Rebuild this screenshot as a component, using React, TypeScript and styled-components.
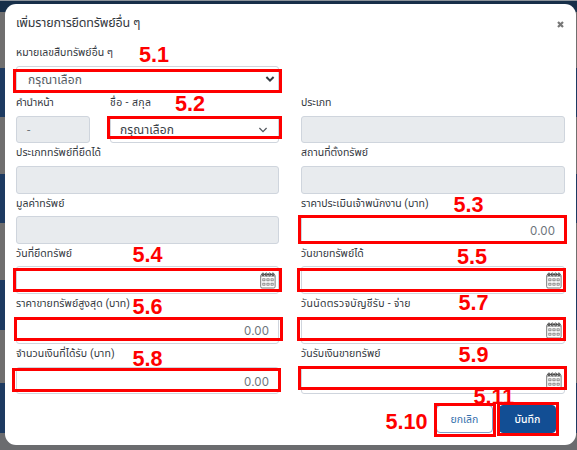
import React from 'react';
import styled, { createGlobalStyle } from 'styled-components';

const GlobalStyle = createGlobalStyle`
  * { box-sizing: border-box; }
  body {
    margin: 0;
    overflow: hidden;
    font-family: Roboto, "Noto Sans Thai", "Noto Sans", sans-serif;
    color: #33383e;
  }
`;

const Page = styled.div`
  position: relative;
  width: 577px;
  height: 450px;
  padding: 4px 1px 5px 5px;
  overflow: hidden;
  background:
    linear-gradient(#8d949b 0 1px, #172f49 1px 12px, transparent 12px),
    linear-gradient(
      #706f6f 0 68px, #1d3a61 68px 117px, #706f6f 117px 174px, #1d3a61 174px 223px,
      #706f6f 223px 280px, #1d3a61 280px 330px, #706f6f 330px 383px, #1d3a61 383px 433px,
      #6b6c6f 433px
    );
`;

const Modal = styled.section`
  display: flex;
  flex-direction: column;
  height: 441px;
  padding: 8px 11px 12px;
  border-radius: 11px;
  background: #fff;
`;

const Header = styled.header`
  display: flex;
  align-items: center;
  justify-content: space-between;
  height: 24px;
`;

const Title = styled.h1`
  margin: 0;
  padding-bottom: 2px;
  font-size: 12.5px;
  font-weight: 400;
  line-height: 22px;
  letter-spacing: -0.17px;
  white-space: nowrap;
`;

const CloseButton = styled.button`
  display: flex;
  padding: 0;
  margin-right: 1px;
  border: 0;
  background: none;
`;

const Form = styled.div`
  display: grid;
  grid-template-columns: 263px 264px;
  column-gap: 22px;
  grid-auto-rows: 50.2px;
  margin-top: 7px;
`;

const Field = styled.div`
  display: flex;
  flex-direction: column;
  min-width: 0;
`;

const FullRow = styled.div`
  display: grid;
  grid-template-columns: 263px;
  grid-column: 1 / -1;
`;

const NameRow = styled.div`
  display: grid;
  grid-template-columns: 74px 169px;
  column-gap: 20px;
`;

const Label = styled.label<{ $spacing?: number }>`
  height: 22.6px;
  font-size: 10.5px;
  line-height: 19.5px;
  letter-spacing: ${(p) => p.$spacing ?? 0.03}px;
  white-space: nowrap;
`;

const Control = styled.div<{ $disabled?: boolean; $pad?: string; $end?: boolean; $color?: string }>`
  display: flex;
  align-items: center;
  justify-content: ${(p) => (p.$end ? 'flex-end' : 'space-between')};
  height: 27.6px;
  padding: ${(p) => p.$pad ?? '0 10px'};
  border: 1px solid #cfd5dd;
  border-radius: 3px;
  background: ${(p) => (p.$disabled ? '#e8ebee' : '#fff')};
  color: ${(p) => p.$color ?? '#6d747b'};
  font-size: 12px;
  line-height: 20px;
  letter-spacing: 0.1px;
  white-space: nowrap;
`;

const SelectText = styled.span<{ $drop?: number }>`
  padding-top: ${(p) => p.$drop ?? 0}px;
`;

const Amount = styled.span`
  padding-top: 2px;
  font-family: Inter, sans-serif;
  font-size: 11.5px;
`;

const Footer = styled.footer`
  display: flex;
  justify-content: flex-end;
  gap: 6px;
  margin: auto 9px 0 0;
`;

const Button = styled.button<{ $primary?: boolean }>`
  width: 57px;
  height: 28px;
  padding: 2px 0 0;
  border: 1px solid ${(p) => (p.$primary ? '#124e94' : '#7fa0c8')};
  border-radius: 4px;
  background: ${(p) => (p.$primary ? '#124e94' : '#fff')};
  color: ${(p) => (p.$primary ? '#fff' : '#356fac')};
  font-family: inherit;
  font-size: 10.5px;
  font-weight: ${(p) => (p.$primary ? 500 : 400)};
`;

const Frame = styled.div<{ $x: number; $y: number; $w: number; $h: number }>`
  position: absolute;
  left: ${(p) => p.$x}px;
  top: ${(p) => p.$y}px;
  width: ${(p) => p.$w}px;
  height: ${(p) => p.$h}px;
  border: 3px solid #fe0000;
`;

const Marker = styled.span<{ $x: number; $base: number }>`
  position: absolute;
  left: ${(p) => p.$x - 0.5}px;
  top: ${(p) => p.$base - 19}px;
  color: #fe0000;
  font: bold 21.6px/24px "Liberation Sans", sans-serif;
`;

const Chevron = ({ bold = false }: { bold?: boolean }) => (
  <svg width="10" height="8" viewBox="0 0 10 8" fill="none" stroke={bold ? '#343a40' : '#565c62'} strokeWidth={bold ? 2 : 1.3}>
    <path d="M1.4 2 5 5.6 8.6 2" />
  </svg>
);

const CalendarIcon = () => (
  <svg width="16" height="17" viewBox="0 0 16 17" fill="none" stroke="#777">
    <rect x="0.7" y="2.5" width="14.4" height="13.5" rx="1.3" />
    <path d="M1 4.2h14" stroke="#999" strokeWidth="1" />
    {[3, 6.3, 9.6, 12.9].map((x) => (
      <ellipse key={x} cx={x} cy="2.4" rx="1.1" ry="1.4" stroke="#333" strokeWidth="0.9" />
    ))}
    {[7.8, 12.2].map((y) =>
      [3.9, 8, 12.1].map((x) => (
        <rect key={`${x}-${y}`} x={x - 1.1} y={y - 1} width="2.2" height="2" strokeWidth="0.8" />
      )),
    )}
  </svg>
);

type Kind = 'disabled' | 'amount' | 'date';

const FormField = ({ label, kind, spacing }: { label: string; kind: Kind; spacing?: number }) => (
  <Field>
    <Label $spacing={spacing}>{label}</Label>
    <Control $disabled={kind === 'disabled'} $end={kind !== 'disabled'} $pad={kind === 'date' ? '0 2px' : '0 9px'}>
      {kind === 'amount' && <Amount>0.00</Amount>}
      {kind === 'date' && <CalendarIcon />}
    </Control>
  </Field>
);

const fields: { label: string; kind: Kind; spacing?: number }[] = [
  { label: 'ประเภททรัพย์ที่ยึดได้', kind: 'disabled' },
  { label: 'สถานที่ตั้งทรัพย์', kind: 'disabled' },
  { label: 'มูลค่าทรัพย์', kind: 'disabled' },
  { label: 'ราคาประเมินเจ้าพนักงาน (บาท)', kind: 'amount' },
  { label: 'วันที่ยึดทรัพย์', kind: 'date' },
  { label: 'วันขายทรัพย์ได้', kind: 'date' },
  { label: 'ราคาขายทรัพย์สูงสุด (บาท)', kind: 'amount', spacing: 0.08 },
  { label: 'วันนัดตรวจบัญชีรับ - จ่าย', kind: 'date', spacing: 0.28 },
  { label: 'จำนวนเงินที่ได้รับ (บาท)', kind: 'amount', spacing: 0.1 },
  { label: 'วันรับเงินขายทรัพย์', kind: 'date' },
];

const frames = [
  [13, 69, 269, 24], [107, 116, 175, 23], [298, 215, 269, 29], [13, 268, 269, 24],
  [297, 268, 269, 24], [14, 317, 269, 24], [297, 317, 269, 24], [12, 368, 269, 24],
  [298, 366, 269, 24], [434, 403, 62, 34], [497, 402, 62, 34],
];

const markers: [string, number, number][] = [
  ['5.1', 139.5, 62], ['5.2', 175.5, 111], ['5.3', 454, 212], ['5.4', 133, 262],
  ['5.5', 457.5, 264], ['5.6', 133, 314], ['5.7', 459, 310], ['5.8', 133, 366],
  ['5.9', 459, 362], ['5.10', 386, 429], ['5.11', 474, 404],
];

export default function App() {
  return (
    <Page>
      <GlobalStyle />
      <Modal>
        <Header>
          <Title>เพิ่มรายการยึดทรัพย์อื่น ๆ</Title>
          <CloseButton aria-label="ปิด">
            <svg width="7" height="7" viewBox="0 0 7 7" stroke="#777" strokeWidth="2.2">
              <path d="M1 1l5 5M6 1L1 6" />
            </svg>
          </CloseButton>
        </Header>
        <Form>
          <FullRow>
            <Field>
              <Label>หมายเลขสืบทรัพย์อื่น ๆ</Label>
              <Control $pad="0 3px 0 11px" $color="#565d64">
                <SelectText $drop={2}>กรุณาเลือก</SelectText>
                <Chevron bold />
              </Control>
            </Field>
          </FullRow>
          <NameRow>
            <Field>
              <Label $spacing={-0.1}>คำนำหน้า</Label>
              <Control $disabled>-</Control>
            </Field>
            <Field>
              <Label $spacing={0.4}>ชื่อ - สกุล</Label>
              <Control $color="#3b4148" $pad="0 10px 0 9px">
                <SelectText>กรุณาเลือก</SelectText>
                <Chevron />
              </Control>
            </Field>
          </NameRow>
          <FormField label="ประเภท" kind="disabled" spacing={-0.1} />
          {fields.map((f) => <FormField key={f.label} {...f} />)}
        </Form>
        <Footer>
          <Button>ยกเลิก</Button>
          <Button $primary>บันทึก</Button>
        </Footer>
      </Modal>
      {markers.map(([text, x, base]) => (
        <Marker key={text} $x={x} $base={base}>{text}</Marker>
      ))}
      {frames.map(([x, y, w, h]) => <Frame key={`${x}-${y}`} $x={x} $y={y} $w={w} $h={h} />)}
    </Page>
  );
}
